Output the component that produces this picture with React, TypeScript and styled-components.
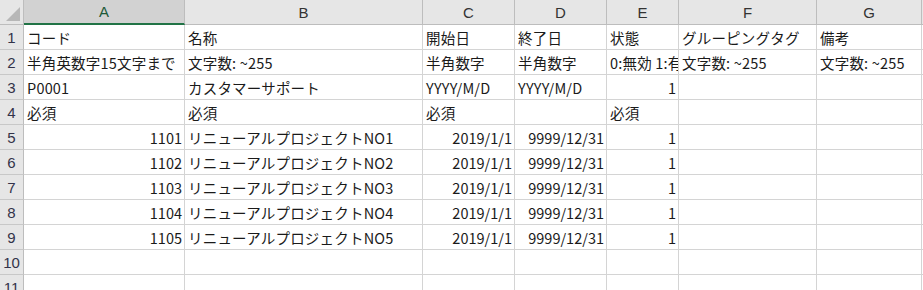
import React from "react";
import styled, { createGlobalStyle } from "styled-components";

const GlobalStyle = createGlobalStyle`
  html, body { margin: 0; padding: 0; background: #ffffff; }
  body { overflow: hidden; }
`;

const COLS = [
  { key: "A", width: 161 },
  { key: "B", width: 238 },
  { key: "C", width: 92 },
  { key: "D", width: 92 },
  { key: "E", width: 72 },
  { key: "F", width: 138 },
  { key: "G", width: 105 },
];

type Cell = { v: string; num?: boolean } | null;

const ROWS: Cell[][] = [
  [{ v: "コード" }, { v: "名称" }, { v: "開始日" }, { v: "終了日" }, { v: "状態" }, { v: "グルーピングタグ" }, { v: "備考" }],
  [{ v: "半角英数字15文字まで" }, { v: "文字数: ~255" }, { v: "半角数字" }, { v: "半角数字" }, { v: "0:無効 1:有効" }, { v: "文字数: ~255" }, { v: "文字数: ~255" }],
  [{ v: "P0001" }, { v: "カスタマーサポート" }, { v: "YYYY/M/D" }, { v: "YYYY/M/D" }, { v: "1", num: true }, null, null],
  [{ v: "必須" }, { v: "必須" }, { v: "必須" }, null, { v: "必須" }, null, null],
  ...[1, 2, 3, 4, 5].map((n): Cell[] => [
    { v: `110${n}`, num: true },
    { v: `リニューアルプロジェクトNO${n}` },
    { v: "2019/1/1", num: true },
    { v: "9999/12/31", num: true },
    { v: "1", num: true },
    null,
    null,
  ]),
  [null, null, null, null, null, null, null],
  [null, null, null, null, null, null, null],
];

const Sheet = styled.div`
  display: grid;
  grid-template-columns: 24px ${COLS.map((c) => `${c.width}px`).join(" ")} 1fr;
  grid-auto-rows: 25px;
  width: 923px;
  height: 290px;
  overflow: hidden;
  font-family: "Noto Sans CJK JP", "Noto Sans", sans-serif;
  font-size: 14.5px;
  color: #1a1a1a;
`;

const Corner = styled.div`
  position: relative;
  box-sizing: border-box;
  background: #e6e6e6;
  border-right: 1px solid #bdbdbd;
  border-bottom: 1px solid #bdbdbd;
  &::after {
    content: "";
    position: absolute;
    right: 3px;
    bottom: 3px;
    width: 0;
    height: 0;
    border-left: 14px solid transparent;
    border-bottom: 14px solid #b7b7b7;
  }
`;

const ColHead = styled.div<{ $active?: boolean }>`
  box-sizing: border-box;
  display: flex;
  align-items: center;
  justify-content: center;
  background: ${(p) => (p.$active ? "#d2d2d2" : "#e6e6e6")};
  border-right: 1px solid #bdbdbd;
  border-bottom: ${(p) => (p.$active ? "2px solid #217346" : "1px solid #bdbdbd")};
  color: ${(p) => (p.$active ? "#1e5a38" : "#333333")};
  font-family: "Liberation Sans", "Noto Sans", sans-serif;
  font-size: 15px;
`;

const RowHead = styled.div`
  box-sizing: border-box;
  display: flex;
  align-items: center;
  justify-content: center;
  background: #e6e6e6;
  border-right: 1px solid #bdbdbd;
  border-bottom: 1px solid #c8c8c8;
  color: #33334a;
  font-family: "Liberation Sans", "Noto Sans", sans-serif;
  font-size: 15px;
`;

const DataCell = styled.div<{ $num?: boolean }>`
  box-sizing: border-box;
  display: flex;
  align-items: center;
  justify-content: ${(p) => (p.$num ? "flex-end" : "flex-start")};
  padding: ${(p) => (p.$num ? "0 2px 0 0" : "0 0 0 3px")};
  border-right: 1px solid #d4d4d4;
  border-bottom: 1px solid #d4d4d4;
  white-space: nowrap;
  overflow: hidden;
  letter-spacing: ${(p) => (p.$num ? "0" : "0.2px")};
`;

const Filler = styled.div`
  box-sizing: border-box;
  border-bottom: 1px solid #d4d4d4;
  background: #ffffff;
`;

const HeadFiller = styled.div`
  box-sizing: border-box;
  background: #e6e6e6;
  border-bottom: 1px solid #bdbdbd;
`;

export default function App() {
  return (
    <>
      <GlobalStyle />
      <Sheet>
        <Corner />
        {COLS.map((c) => (
          <ColHead key={c.key} $active={c.key === "A"}>
            {c.key}
          </ColHead>
        ))}
        <HeadFiller />
        {ROWS.map((row, r) => (
          <React.Fragment key={r}>
            <RowHead>{r + 1}</RowHead>
            {row.map((cell, c) => (
              <DataCell key={c} $num={cell?.num}>
                {cell?.v ?? ""}
              </DataCell>
            ))}
            <Filler />
          </React.Fragment>
        ))}
      </Sheet>
    </>
  );
}
